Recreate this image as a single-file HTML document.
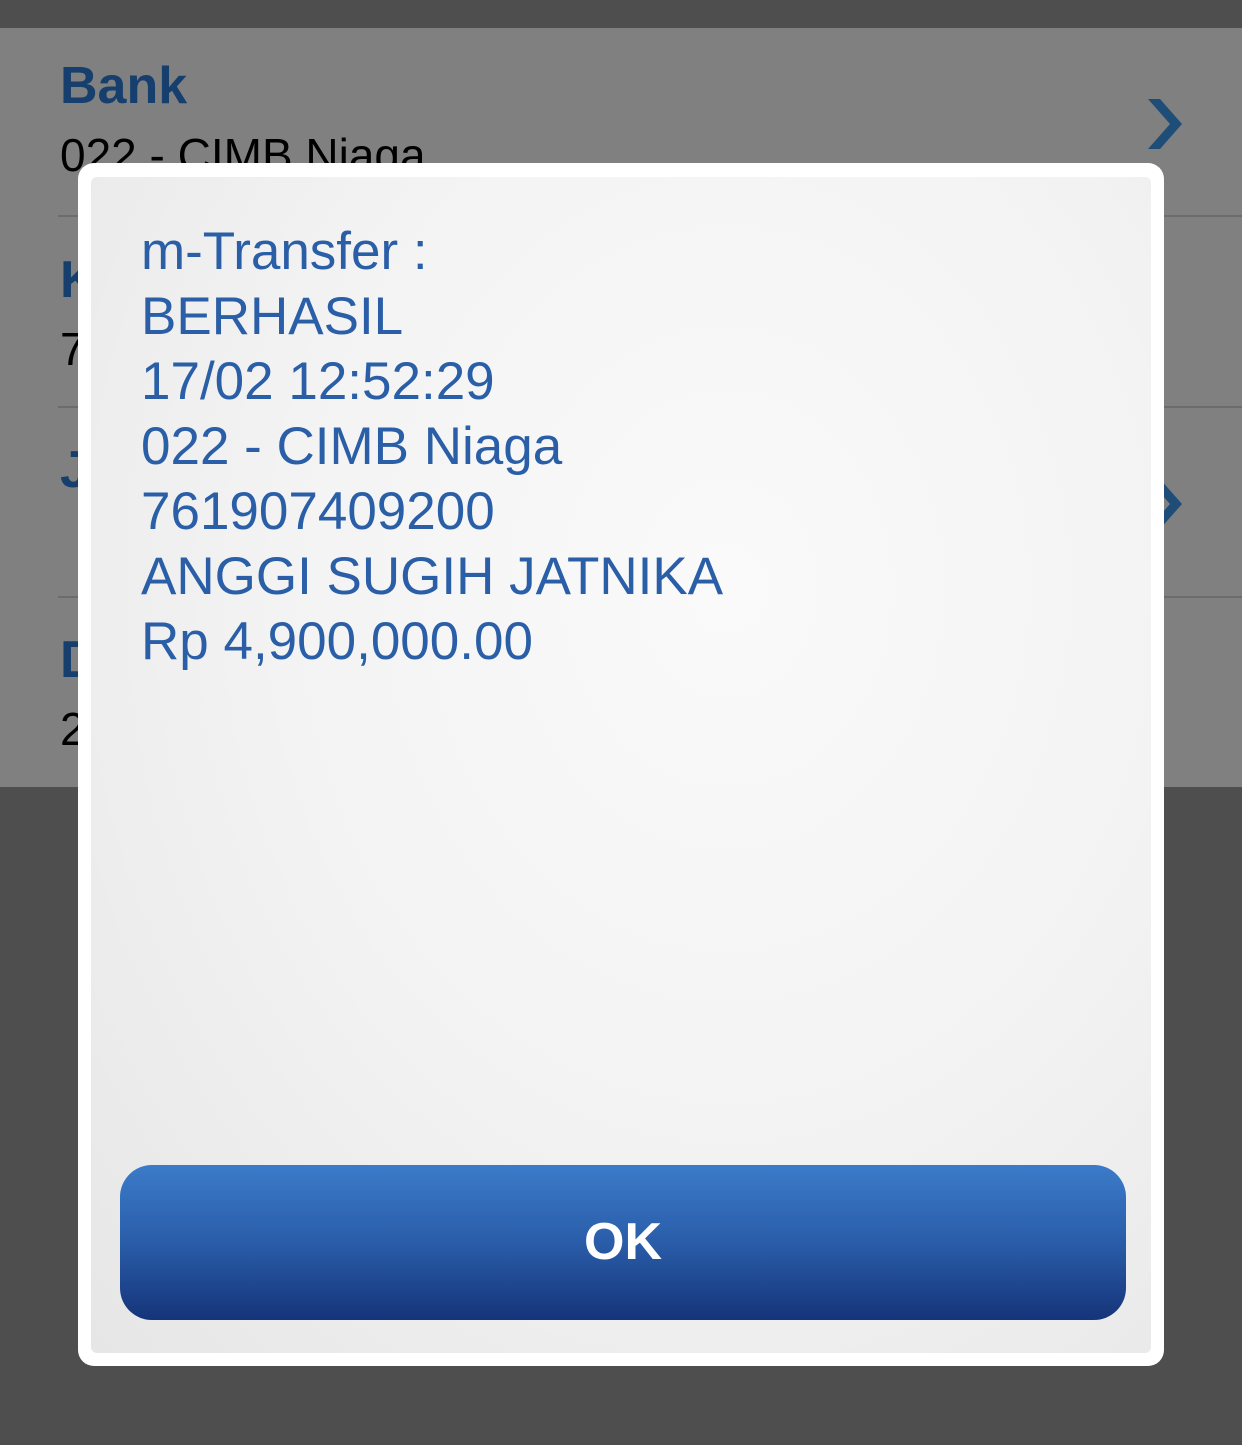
<!DOCTYPE html>
<html><head><style>
*{margin:0;padding:0;box-sizing:border-box}
body{width:1242px;height:1445px;background:#4e4e4e;position:relative;overflow:hidden;font-family:"Liberation Sans",sans-serif}
.bg{position:absolute;left:0;top:28px;width:1242px;height:759px;background:#808080}
.div{position:absolute;left:58px;right:0;height:2px;background:#6c6c6c}
.lbl{position:absolute;left:60px;color:#163f6e;font-weight:bold;font-size:52px}
.val{position:absolute;left:60px;color:#000;font-size:46px}
.dlg{position:absolute;left:78px;top:163px;width:1086px;height:1203px;background:#fff;border-radius:16px}
.in{position:absolute;left:13px;top:14px;width:1060px;height:1176px;border-radius:6px;background:radial-gradient(ellipse at 60% 35%,#fafafa 0%,#f3f3f3 50%,#e6e6e6 100%)}
.txt{position:absolute;left:50px;top:42px;color:#2a5fa8;font-size:53px;line-height:65px;letter-spacing:0px}
.btn{position:absolute;left:29px;top:988px;width:1006px;height:155px;border-radius:32px;background:linear-gradient(#3b7bc9,#2a5da9 50%,#15347a);color:#fff;font-weight:bold;font-size:52px;text-align:center;line-height:155px}
</style></head><body>
<div class="bg"></div>
<div class="lbl" style="top:56px">Bank</div>
<div class="val" style="top:128px">022 - CIMB Niaga</div>
<svg style="position:absolute;left:1146px;top:97px" width="40" height="54" viewBox="0 0 40 54"><path d="M2 2 L14 2 L36 27 L14 52 L2 52 L24 27Z" fill="#1e4d78"/></svg>
<div class="div" style="top:215px"></div>
<div class="lbl" style="top:250px">K</div>
<div class="val" style="top:322px">7</div>
<div class="div" style="top:406px"></div>
<div class="lbl" style="top:440px">J</div>
<svg style="position:absolute;left:1146px;top:477px" width="40" height="54" viewBox="0 0 40 54"><path d="M2 2 L14 2 L36 27 L14 52 L2 52 L24 27Z" fill="#1e4d78"/></svg>
<div class="div" style="top:596px"></div>
<div class="lbl" style="top:630px">D</div>
<div class="val" style="top:702px">2</div>
<div class="dlg"><div class="in">
<div class="txt">m-Transfer :<br>BERHASIL<br>17/02 12:52:29<br>022 - CIMB Niaga<br>761907409200<br>ANGGI SUGIH JATNIKA<br>Rp 4,900,000.00</div>
<div class="btn">OK</div>
</div></div>
</body></html>
